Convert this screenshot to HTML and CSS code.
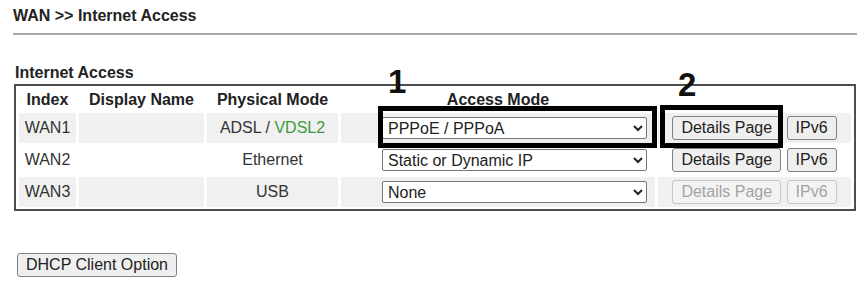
FILE: index.html
```html
<!DOCTYPE html>
<html lang="en">
<head>
    <meta charset="UTF-8">
    <title>WAN &gt;&gt; Internet Access</title>
    <link rel="stylesheet" href="styles.css">
</head>
<body>

<div class="page">
    <h1 class="page-title">WAN &gt;&gt; Internet Access</h1>

    <div class="section">
        <div class="section-label">Internet Access</div>

        <table class="wan-table">
            <colgroup>
                <col class="col-index">
                <col class="col-name">
                <col class="col-phys">
                <col class="col-mode">
                <col class="col-actions">
            </colgroup>
            <thead>
                <tr>
                    <th>Index</th>
                    <th>Display Name</th>
                    <th>Physical Mode</th>
                    <th>Access Mode</th>
                    <th></th>
                </tr>
            </thead>
            <tbody>
                <tr class="shaded">
                    <td>WAN1</td>
                    <td></td>
                    <td>ADSL / <span class="vdsl">VDSL2</span></td>
                    <td class="mode-cell">
                        <select class="mode-select">
                            <option>PPPoE / PPPoA</option>
                        </select>
                    </td>
                    <td class="actions">
                        <button class="btn">Details Page</button>
                        <button class="btn">IPv6</button>
                    </td>
                </tr>
                <tr>
                    <td>WAN2</td>
                    <td></td>
                    <td>Ethernet</td>
                    <td class="mode-cell">
                        <select class="mode-select">
                            <option>Static or Dynamic IP</option>
                        </select>
                    </td>
                    <td class="actions">
                        <button class="btn">Details Page</button>
                        <button class="btn">IPv6</button>
                    </td>
                </tr>
                <tr class="shaded">
                    <td>WAN3</td>
                    <td></td>
                    <td>USB</td>
                    <td class="mode-cell">
                        <select class="mode-select">
                            <option>None</option>
                        </select>
                    </td>
                    <td class="actions">
                        <button class="btn" disabled>Details Page</button>
                        <button class="btn" disabled>IPv6</button>
                    </td>
                </tr>
            </tbody>
        </table>
    </div>

    <div class="bottom-bar">
        <button class="btn">DHCP Client Option</button>
    </div>
</div>

<!-- callouts drawn over the screenshot -->
<div class="callout-box box-1"></div>
<div class="callout-box box-2"></div>
<div class="callout-num num-1">1</div>
<div class="callout-num num-2">2</div>

</body>
</html>
```

FILE: styles.css
```css
* {
    margin: 0;
    padding: 0;
    box-sizing: border-box;
}

body {
    font-family: "Liberation Sans", Arial, sans-serif;
    font-size: 16px;
    line-height: 18px;
    color: #333;
    background-color: #fff;
}

.page {
    padding: 7px 10px 0 13px;
}

.page-title {
    font-size: 16px;
    font-weight: bold;
    color: #222;
    padding-bottom: 8px;
    border-bottom: 2px solid #a9a9a9;
}

.section {
    margin-top: 29px;
}

.section-label {
    font-weight: bold;
    color: #222;
    padding-left: 2px;
    margin-bottom: 2px;
}

.wan-table {
    margin-left: 1px;
    width: 842px;
    table-layout: fixed;
    border: 2px solid #4d4d4d;
    border-spacing: 3px 2px;
}

.col-index { width: 57px; }
.col-name { width: 125px; }
.col-phys { width: 131px; }
.col-mode { width: 314px; }
.col-actions { width: 193px; }

.wan-table th {
    font-weight: bold;
    color: #222;
    height: 23px;
    padding-top: 3px;
    text-align: center;
    vertical-align: top;
}

.wan-table td {
    height: 30px;
    text-align: center;
    vertical-align: middle;
    white-space: nowrap;
}

.wan-table tr.shaded td {
    background-color: #f0f0f0;
}

.vdsl {
    color: #3c9a3c;
}

.wan-table td.mode-cell {
    text-align: left;
    padding-left: 41px;
}

.mode-select {
    width: 265px;
    height: 22px;
    font-family: "Liberation Sans", Arial, sans-serif;
    font-size: 16px;
    color: #222;
    background-color: #fff;
    border: 1px solid #767676;
    border-radius: 2px;
    padding-left: 1px;
    vertical-align: middle;
}

.actions .btn + .btn {
    margin-left: 1px;
}

.btn {
    font-family: "Liberation Sans", Arial, sans-serif;
    font-size: 16px;
    line-height: 18px;
    color: #222;
    background-color: #efefef;
    border: 1px solid #808080;
    border-radius: 3px;
    padding: 2px 8px;
    vertical-align: middle;
}

.btn:disabled {
    color: #a3a3a3;
    background-color: #f3f3f3;
    border-color: #c8c8c8;
}

.bottom-bar {
    margin-top: 42px;
    padding-left: 4px;
}

.callout-box {
    position: absolute;
    border: 5px solid #000;
}

.box-1 {
    left: 378px;
    top: 106px;
    width: 279px;
    height: 42px;
}

.box-2 {
    left: 660px;
    top: 105px;
    width: 123px;
    height: 43px;
}

.callout-num {
    position: absolute;
    font-size: 33px;
    line-height: 33px;
    font-weight: bold;
    color: #111;
}

.num-1 {
    left: 388px;
    top: 65px;
}

.num-2 {
    left: 678px;
    top: 68px;
}
```
